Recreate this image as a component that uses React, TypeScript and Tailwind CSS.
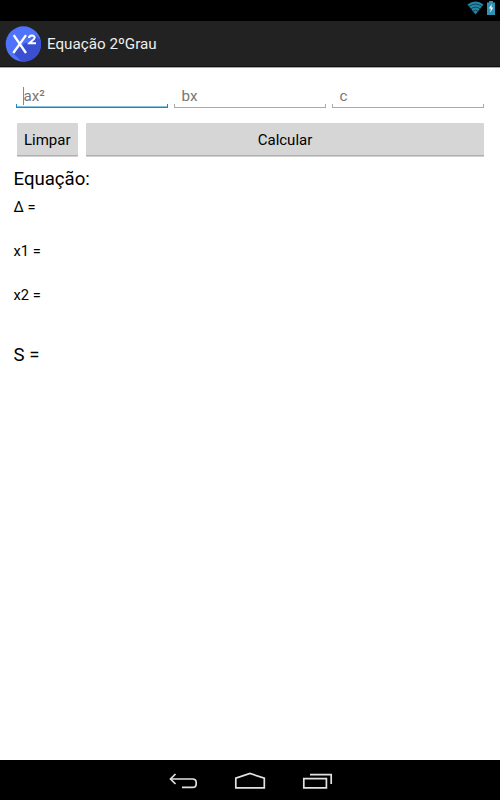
import React from 'react';

interface CoefficientFieldProps {
  hint: string;
  focused?: boolean;
}

const CoefficientField: React.FC<CoefficientFieldProps> = ({ hint, focused }) => {
  return (
    <div className="relative h-[25px] flex-1 pl-[7px]">
      <div className="flex h-[27px] items-center text-[15.2px] leading-[27px] text-[#777777]">
        {focused && <span className="-mt-[2px] -mr-px h-[18px] w-px bg-[#888888]" />}
        <span className="pl-[0.5px]">{hint}</span>
      </div>
      <div
        className={
          focused
            ? 'absolute inset-x-0 bottom-0 h-[4px] border-x border-b border-[#168ac1] shadow-[inset_0_-1px_0_#86c1de]'
            : 'absolute inset-x-0 bottom-0 h-[4px] border-x border-b border-[#aaaaaa]'
        }
      />
    </div>
  );
};

interface HoloButtonProps {
  label: string;
  className: string;
}

const HoloButton: React.FC<HoloButtonProps> = ({ label, className }) => {
  return (
    <button
      className={`h-[34px] rounded-[1px] border-b border-[#d0d0d0] bg-[#d6d6d6] pt-px text-[15px] text-black shadow-[inset_0_-1px_0_#b0b0b0] ${className}`}
    >
      {label}
    </button>
  );
};

const AppLogo = () => (
  <svg className="ml-[5px] size-[37px]" viewBox="0 0 37 37">
    <defs>
      <clipPath id="disc">
        <circle cx="18.4" cy="18" r="17.7" />
      </clipPath>
    </defs>
    <circle cx="18.4" cy="18" r="17.7" fill="#4f73fb" />
    <path d="M30.5 9 L45 23.5 V45 H26 L8 27 L20 17 L24 17 Z" fill="#3b50d0" clipPath="url(#disc)" />
    <g fill="none" stroke="#ffffff">
      <path d="M8.7 9.2 L21 27 M21 9.2 L8.3 27" strokeWidth="2.3" />
      <path d="M24 12 C24.2 8.8 29.7 8.8 29.7 11.6 C29.7 13.5 26.4 14.8 24.4 17.2 H31" strokeWidth="2.1" />
    </g>
  </svg>
);

const WifiIcon = () => (
  <svg className="h-[14px] w-[17px]" viewBox="0 0 17 14" fill="none">
    <path d="M0.5 3.6 Q8.5 -2.6 16.5 3.6 L8.5 13.5 Z" fill="#2587a8" />
    <path d="M1.8 5.6 Q8.5 0.6 15.2 5.6 M3.7 8 Q8.5 4.2 13.3 8 M5.6 10.4 Q8.5 8 11.4 10.4" stroke="#0b3546" strokeWidth="0.8" />
  </svg>
);

const BatteryIcon = () => (
  <svg className="h-[14px] w-[8px]" viewBox="0 0 8 14">
    <path d="M2 0 H6 V1.5 H8 V14 H0 V1.5 H2 Z" fill="#2f92b3" />
    <path d="M4.8 3 L1.8 7.6 H3.8 L3.2 11.8 L6.3 6.5 H4.4 Z" fill="#eef8fb" />
  </svg>
);

const NavigationBar = () => (
  <nav className="flex h-10 justify-center bg-black">
    <svg className="h-10 w-[200px]" viewBox="0 0 200 40" fill="none" stroke="#e2e2e2" strokeWidth="1.7">
      <path d="M20 19 H42.5 Q46.2 19 46.2 22.4 V24 Q46.2 27.4 42.5 27.4 H32" />
      <path d="M25.5 14 L20.5 19 L25.5 24" />
      <path d="M85.8 27.8 V18.2 L100 13.5 L114.3 18.2 V27.8 Z" />
      <path d="M153.8 18.7 H176.4 V27.8 H153.8 Z" />
      <path d="M160 14.7 H181.2 V24" />
    </svg>
  </nav>
);

export default function App() {
  return (
    <div className="flex h-[800px] w-[500px] flex-col overflow-hidden bg-white font-[Roboto,sans-serif] text-black">
      <div className="flex h-[21px] items-start justify-end gap-[3px] bg-black pt-[1px] pr-[5px]">
        <WifiIcon />
        <BatteryIcon />
      </div>

      <header className="flex h-[47px] items-center border-b border-[#a8a8a8] bg-[#222222] shadow-[inset_0_-1px_0_#111111]">
        <AppLogo />
        <h1 className="ml-[5px] text-[15.2px] text-[#eeeeee]">Equação 2ºGrau</h1>
      </header>

      <main className="flex-1">
        <div className="mt-[15px] mr-[16px] ml-[16px] flex gap-[6px]">
          <CoefficientField hint="ax²" focused />
          <CoefficientField hint="bx" />
          <CoefficientField hint="c" />
        </div>

        <div className="mt-[15px] mr-[16px] ml-[16.5px] flex gap-2">
          <HoloButton label="Limpar" className="w-[61.5px]" />
          <HoloButton label="Calcular" className="flex-1" />
        </div>

        <div className="pl-[13.5px] text-[14.7px]">
          <p className="mt-[10px] text-[18.6px] leading-[24px]">Equação:</p>
          <p className="mt-[6px] leading-[20px]">Δ =</p>
          <p className="mt-[24px] leading-[20px]">x1 =</p>
          <p className="mt-[24px] leading-[20px]">x2 =</p>
          <p className="mt-[38px] text-[18.6px] leading-[24px]">S =</p>
        </div>
      </main>

      <NavigationBar />
    </div>
  );
}
